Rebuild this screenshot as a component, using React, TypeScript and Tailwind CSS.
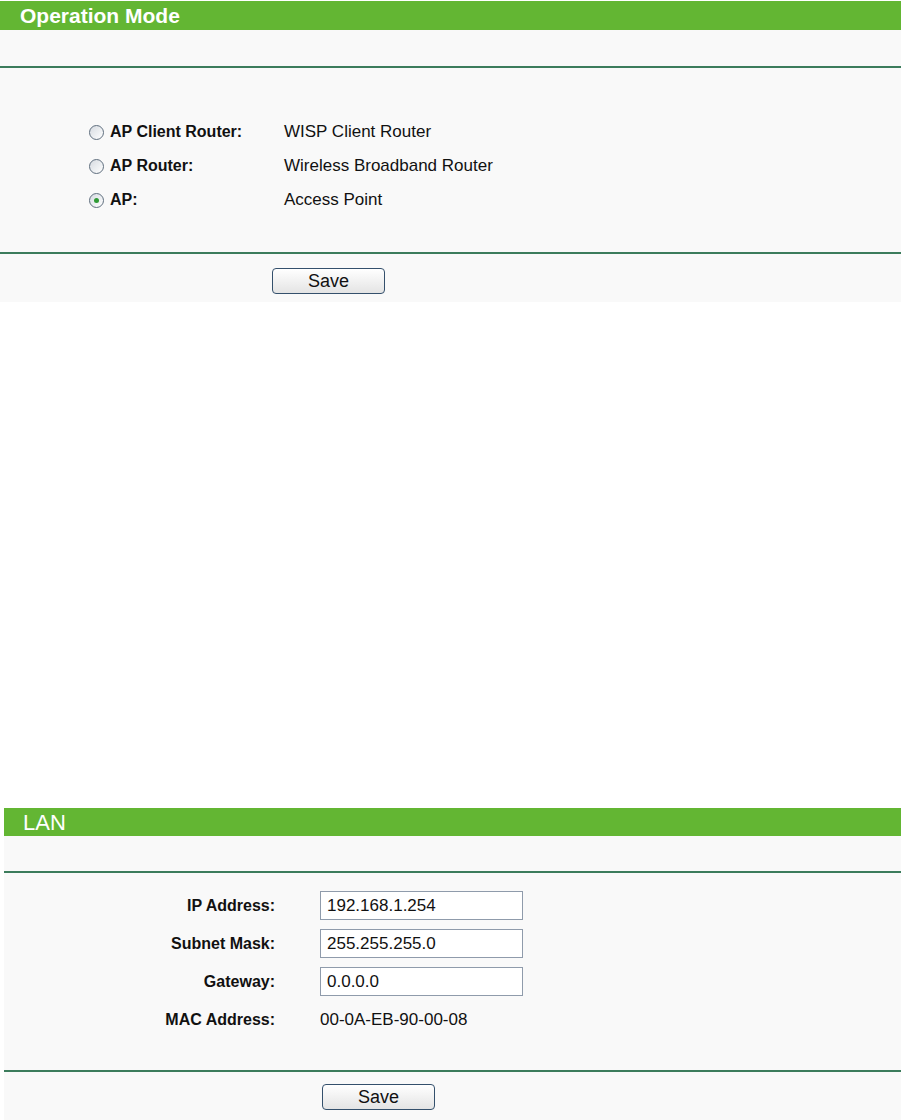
import React from 'react';

const font = { fontFamily: '"Liberation Sans", Arial, sans-serif' };

const Radio: React.FC<{ checked?: boolean }> = ({ checked }) => (
  <span className="flex h-[15px] w-[15px] items-center justify-center rounded-full border border-[#5f6e7e] bg-gradient-to-br from-[#d6dbe1] to-white">
    {checked && <span className="h-[5px] w-[5px] rounded-full bg-[#2f9a35]" />}
  </span>
);

const SaveButton: React.FC = () => (
  <button className="h-[26px] w-[113px] rounded-[4px] border border-[#34506c] bg-gradient-to-b from-white to-[#e4e4e4] text-[18px] leading-none text-[#111]">
    Save
  </button>
);

const Divider: React.FC = () => <div className="h-[2px] bg-[#3c7c5c]" />;

const modes = [
  { label: 'AP Client Router:', value: 'WISP Client Router', checked: false },
  { label: 'AP Router:', value: 'Wireless Broadband Router', checked: false },
  { label: 'AP:', value: 'Access Point', checked: true },
];

const lanFields = [
  { label: 'IP Address:', value: '192.168.1.254' },
  { label: 'Subnet Mask:', value: '255.255.255.0' },
  { label: 'Gateway:', value: '0.0.0.0' },
];

export default function App() {
  return (
    <div className="min-h-[1120px] w-[902px] bg-white text-[#111]" style={font}>
      {/* Operation Mode */}
      <div className="w-[901px] pt-[1px]">
        <div className="flex h-[29px] items-center bg-[#63b633] pl-[20px] text-[21px] font-bold text-white">
          Operation Mode
        </div>
        <div className="bg-[#f9f9f9]">
          <div className="h-[36px]" />
          <Divider />
          <div className="pb-[35px] pt-[47px]">
            {modes.map((m) => (
              <div key={m.label} className="flex h-[34px] items-center">
                <div className="flex w-[284px] items-center pl-[89px]">
                  <Radio checked={m.checked} />
                  <span className="ml-[6px] text-[16px] font-bold">{m.label}</span>
                </div>
                <span className="text-[17px]">{m.value}</span>
              </div>
            ))}
          </div>
          <Divider />
          <div className="h-[48px] pl-[272px] pt-[14px]">
            <SaveButton />
          </div>
        </div>
      </div>

      {/* LAN */}
      <div className="ml-[4px] mt-[506px] w-[897px]">
        <div className="flex h-[28px] items-center bg-[#63b633] pl-[19px] text-[22px] text-white">
          LAN
        </div>
        <div className="bg-[#f9f9f9]">
          <div className="h-[35px]" />
          <Divider />
          <div className="flex flex-col gap-[9px] pb-[36px] pt-[18px]">
            {lanFields.map((f) => (
              <div key={f.label} className="flex h-[29px] items-center">
                <span className="w-[271px] text-right text-[16px] font-bold">{f.label}</span>
                <div className="ml-[45px] flex h-[29px] w-[203px] items-center border border-[#8f9bab] bg-white pl-[6px] text-[17px]">
                  {f.value}
                </div>
              </div>
            ))}
            <div className="flex h-[29px] items-center">
              <span className="w-[271px] text-right text-[16px] font-bold">MAC Address:</span>
              <span className="ml-[45px] text-[17px]">00-0A-EB-90-00-08</span>
            </div>
          </div>
          <Divider />
          <div className="h-[48px] pl-[318px] pt-[12px]">
            <SaveButton />
          </div>
        </div>
      </div>
    </div>
  );
}
